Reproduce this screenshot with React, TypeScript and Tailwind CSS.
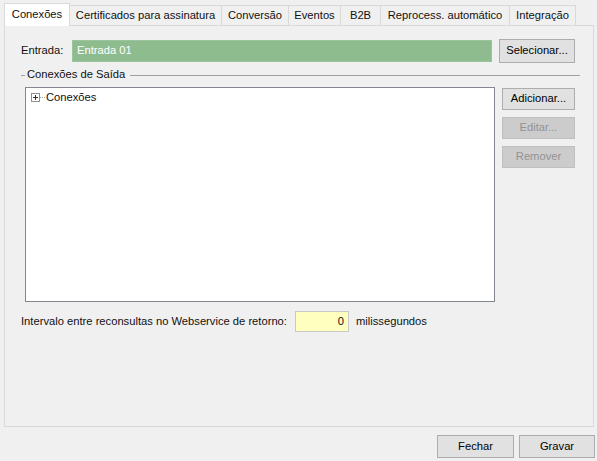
import React from 'react';

const tabs: { label: string; cls: string }[] = [
  { label: 'Conexões', cls: 'w-[66px]' },
  { label: 'Certificados para assinatura', cls: 'w-[152px]' },
  { label: 'Conversão', cls: 'w-[67px]' },
  { label: 'Eventos', cls: 'w-[52px]' },
  { label: 'B2B', cls: 'w-[40px]' },
  { label: 'Reprocess. automático', cls: 'w-[129px]' },
  { label: 'Integração', cls: 'w-[66px]' },
];

const Btn: React.FC<{ label: string; className?: string; disabled?: boolean }> = ({ label, className = '', disabled }) => (
  <button
    type="button"
    className={
      'flex items-center justify-center border ' +
      (disabled ? 'bg-[#cccccc] border-[#bfbfbf] text-[#939393] ' : 'bg-[#e1e1e1] border-[#adadad] text-black ') +
      className
    }
  >
    {label}
  </button>
);

const PlusBox = () => (
  <svg width="9" height="9" viewBox="0 0 9 9" className="block">
    <rect x="0.5" y="0.5" width="8" height="8" fill="#fff" stroke="#919191" />
    <path d="M2 4.5h5M4.5 2v5" stroke="#333" strokeWidth="1" />
  </svg>
);

export default function App() {
  return (
    <div className="w-[597px] h-[461px] bg-[#f0f0f0] flex flex-col text-[11.2px] leading-none text-[#111] font-['Liberation_Sans',Arial,sans-serif]">
      {/* tab strip */}
      <div className="flex items-end h-[25px] pl-[4px]">
        {tabs.map((t, i) =>
          i === 0 ? (
            <div
              key={t.label}
              className={'relative top-[1px] z-10 h-[23px] bg-white border border-b-0 border-[#d9d9d9] flex items-center justify-center ' + t.cls}
            >
              {t.label}
            </div>
          ) : (
            <div
              key={t.label}
              className={'h-[20px] bg-[#f0f0f0] border border-b-0 border-l-0 border-[#d9d9d9] flex items-center justify-center ' + t.cls}
            >
              {t.label}
            </div>
          )
        )}
      </div>

      {/* tab page */}
      <div className="ml-[4px] w-[590px] h-[402px] border border-[#d9d9d9] bg-[#f0f0f0] flex flex-col">
        <div className="flex items-center mt-[13px] ml-[16px] h-[24px]">
          <span className="w-[51px]">Entrada:</span>
          <div className="w-[420px] h-[22px] bg-[#8fbc8f] border border-[#9cc49c] text-white flex items-center pl-[4px]">
            Entrada 01
          </div>
          <Btn label="Selecionar..." className="ml-[7px] w-[76px] h-[24px]" />
        </div>

        {/* group header */}
        <div className="flex items-center mt-[5px] ml-[16px] w-[559px] h-[14px]">
          <div className="w-[4px] h-px bg-[#a0a0a0]" />
          <span className="ml-[2px]">Conexões de Saída</span>
          <div className="flex-1 ml-[5px] h-px bg-[#a0a0a0]" />
        </div>

        <div className="flex mt-[5px] ml-[20px]">
          <div className="w-[470px] h-[215px] bg-white border border-[#828790] pt-[4px] pl-[5px]">
            <div className="flex items-center h-[11px]">
              <PlusBox />
              <div className="w-[5px] border-t border-dotted border-[#a0a0a0]" />
              <span className="ml-[1px]">Conexões</span>
            </div>
          </div>
          <div className="ml-[7px] mt-[1px] flex flex-col gap-[7px]">
            <Btn label="Adicionar..." className="w-[73px] h-[22px]" />
            <Btn label="Editar..." disabled className="w-[73px] h-[22px]" />
            <Btn label="Remover" disabled className="w-[73px] h-[22px]" />
          </div>
        </div>

        <div className="flex items-center mt-[9px] ml-[16px] h-[21px]">
          <span className="w-[274px]">Intervalo entre reconsultas no Webservice de retorno:</span>
          <div className="w-[54px] h-[21px] bg-[#ffffc0] border border-[#c8c8c8] flex items-center justify-end pr-[4px]">0</div>
          <span className="ml-[7px]">milissegundos</span>
        </div>
      </div>

      {/* dialog buttons */}
      <div className="flex justify-end gap-[5px] mt-[8px] pr-[2px]">
        <Btn label="Fechar" className="w-[77px] h-[23px]" />
        <Btn label="Gravar" className="w-[76px] h-[23px]" />
      </div>
    </div>
  );
}
